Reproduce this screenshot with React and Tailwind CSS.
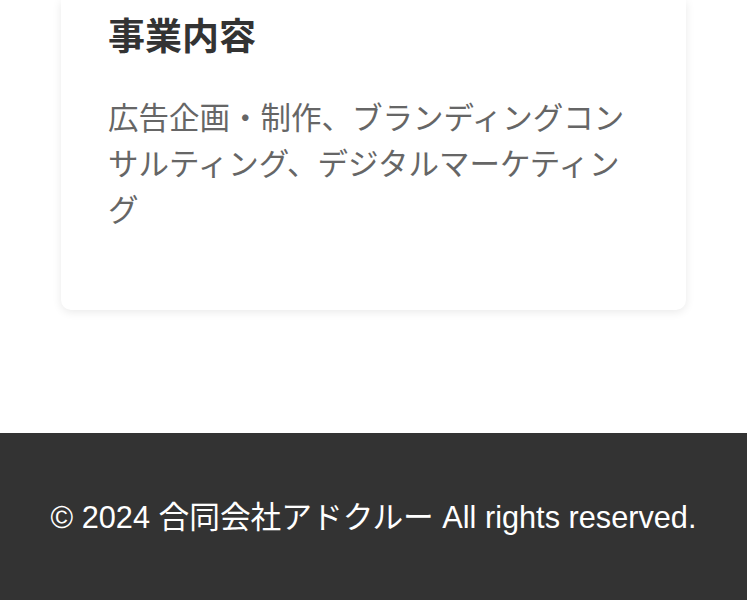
import React from "react";

const App = () => {
  return (
    <div
      className="min-h-screen bg-white"
      style={{ fontFamily: '"Liberation Sans", "Noto Sans CJK JP", sans-serif' }}
    >
      <main className="px-[61px] pb-[123px]">
        {/* Service card (top edge is scrolled off) */}
        <section className="bg-white rounded-b-[10px] shadow-[0_2px_10px_rgba(0,0,0,0.09)] px-[47px] pt-[14px] pb-[77px]">
          <h2 className="text-[37px] leading-[48px] font-bold text-[#333]">
            事業内容
          </h2>
          <p className="mt-[33px] text-[30.5px] leading-[46px] text-[#666]">
            広告企画・制作、ブランディングコンサルティング、デジタルマーケティング
          </p>
        </section>
      </main>

      <footer className="bg-[#333] py-[62px] text-center">
        <p className="text-[30.7px] leading-[45px] text-white">
          © 2024 合同会社アドクルー All rights reserved.
        </p>
      </footer>
    </div>
  );
};

export default App;
